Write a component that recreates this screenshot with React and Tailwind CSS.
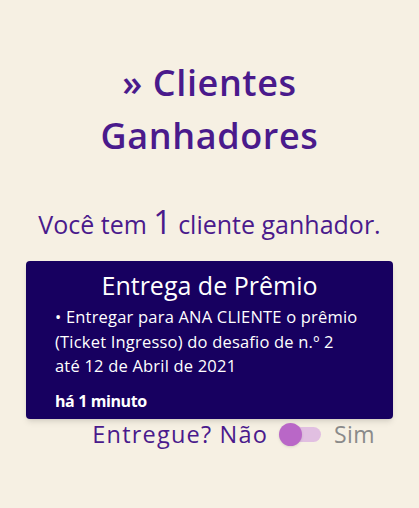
import React, { useState } from 'react'

const font = { fontFamily: '"Open Sans", "Noto Sans", sans-serif' }

export default function App() {
  const [entregue, setEntregue] = useState(false)

  return (
    <div className="min-h-[508px] w-full bg-[#f6f0e3] pt-[56px] pb-10" style={font}>
      <h1 className="text-center text-[36px] leading-[53px] font-semibold text-[#4a1a8c] tracking-[0.6px]">
        » Clientes
        <br />
        Ganhadores
      </h1>

      <p className="mt-[44px] text-center text-[25px] leading-[34px] text-[#4a1a8c]">
        Você tem <span className="text-[32px] leading-none">1</span> cliente ganhador.
      </p>

      <div className="mx-[26px] mt-[20px] rounded-[4px] bg-[#170060] pl-[29px] pr-[14px] pt-[7px] pb-[8px] shadow-md text-white">
        <h2 className="pr-[15px] text-center text-[25px] leading-[34px]">Entrega de Prêmio</h2>
        <p className="mt-[3px] whitespace-nowrap text-[16.5px] leading-[24.5px] tracking-[0.2px]">
          • Entregar para ANA CLIENTE o prêmio
          <br />
          (Ticket Ingresso) do desafio de n.º 2
          <br />
          até 12 de Abril de 2021
        </p>
        <p className="mt-[12px] text-[16px] font-bold leading-[20px] tracking-[-0.4px]">há 1 minuto</p>
      </div>

      <div className="flex items-center justify-end pr-[44px]">
        <span className="text-[23.5px] leading-[31px] tracking-[1.2px] text-[#4a1a8c]">Entregue? Não</span>
        <button
          type="button"
          onClick={() => setEntregue(!entregue)}
          className="relative ml-[11px] h-[31px] w-[42px]"
        >
          <span className="absolute left-[5px] top-[8px] h-[15px] w-[37px] rounded-full bg-[#e1bfe1]" />
          <span
            className={
              entregue
                ? 'absolute left-[19px] top-[4px] h-[23px] w-[23px] rounded-full bg-[#b967c7] shadow'
                : 'absolute left-[0px] top-[4px] h-[23px] w-[23px] rounded-full bg-[#b967c7] shadow'
            }
          />
        </button>
        <span className="ml-[13px] text-[23px] leading-[31px] tracking-[0.4px] text-[#8a8a8a]">Sim</span>
      </div>
    </div>
  )
}
